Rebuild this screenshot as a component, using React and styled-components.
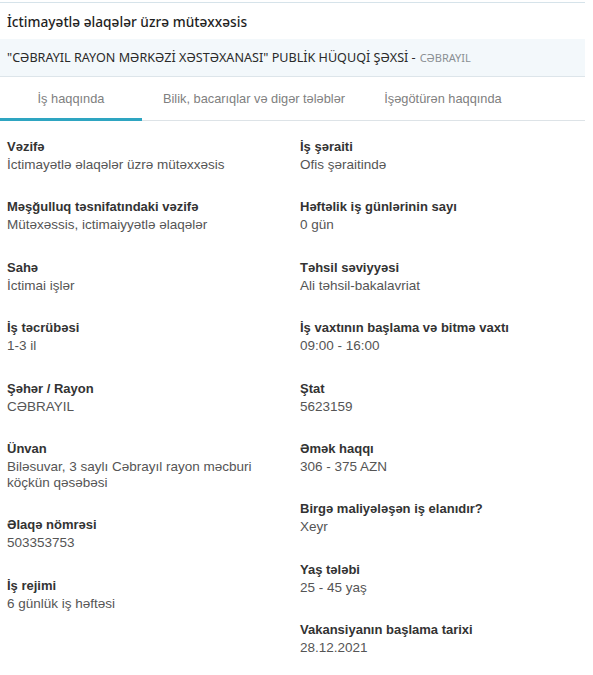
import React, { useState } from 'react';
import styled, { createGlobalStyle } from 'styled-components';

const GlobalStyle = createGlobalStyle`
  body {
    margin: 0;
    background: #fff;
    font-family: "Liberation Sans", Arial, sans-serif;
  }
`;

const Page = styled.div`
  width: 585px;
  padding-top: 2px;
`;

const TitleBar = styled.div`
  border-top: 1px solid #d6e3ea;
  height: 36px;
  display: flex;
  align-items: center;
  padding: 0 7px;
  font-family: "Noto Sans", "Open Sans", sans-serif;
  font-size: 13.7px;
  font-weight: 500;
  color: #1f1f1f;
`;

const CompanyBar = styled.div`
  background: #f3f8fb;
  border-bottom: 1px solid #dde5ea;
  height: 37px;
  display: flex;
  align-items: center;
  gap: 4px;
  padding: 0 7px;
  font-family: "Noto Sans", "Open Sans", sans-serif;
  font-size: 12.6px;
  color: #2a2a2a;
`;

const City = styled.span`
  font-size: 11px;
  color: #8a8f93;
`;

const Tabs = styled.div`
  display: flex;
  border-bottom: 1px solid #dde3e7;
`;

const Tab = styled.button`
  flex: none;
  width: ${(p) => p.$w}px;
  height: 44px;
  padding: 2px 0 0;
  background: none;
  border: none;
  border-bottom: 3px solid ${(p) => (p.$active ? '#2ea5c1' : 'transparent')};
  margin-bottom: -1px;
  font-family: "Liberation Sans", Arial, sans-serif;
  font-size: 12.8px;
  color: #808080;
  white-space: nowrap;
  text-align: center;
  cursor: pointer;
`;

const Details = styled.div`
  display: grid;
  grid-template-columns: 293px 1fr;
  padding: 16px 0 0 7px;
`;

const Column = styled.div`
  display: flex;
  flex-direction: column;
`;

const Item = styled.div`
  padding-bottom: 24.4px;
`;

const Label = styled.div`
  font-size: 13px;
  font-weight: bold;
  line-height: 20px;
  color: #333;
`;

const Value = styled.div`
  font-size: 13.5px;
  line-height: 16px;
  color: #555;
  max-width: 260px;
`;

const left = [
  ['Vəzifə', 'İctimayətlə əlaqələr üzrə mütəxxəsis'],
  ['Məşğulluq təsnifatındaki vəzifə', 'Mütəxəssis, ictimaiyyətlə əlaqələr'],
  ['Sahə', 'İctimai işlər'],
  ['İş təcrübəsi', '1-3 il'],
  ['Şəhər / Rayon', 'CƏBRAYIL'],
  ['Ünvan', 'Biləsuvar, 3 saylı Cəbrayıl rayon məcburi köçkün qəsəbəsi'],
  ['Əlaqə nömrəsi', '503353753'],
  ['İş rejimi', '6 günlük iş həftəsi'],
];

const right = [
  ['İş şəraiti', 'Ofis şəraitində'],
  ['Həftəlik iş günlərinin sayı', '0 gün'],
  ['Təhsil səviyyəsi', 'Ali təhsil-bakalavriat'],
  ['İş vaxtının başlama və bitmə vaxtı', '09:00 - 16:00'],
  ['Ştat', '5623159'],
  ['Əmək haqqı', '306 - 375 AZN'],
  ['Birgə maliyələşən iş elanıdır?', 'Xeyr'],
  ['Yaş tələbi', '25 - 45 yaş'],
  ['Vakansiyanın başlama tarixi', '28.12.2021'],
];

const tabs = [
  ['İş haqqında', 142],
  ['Bilik, bacarıqlar və digər tələblər', 224],
  ['İşəgötürən haqqında', 154],
];

export default function App () {
  const [active, setActive] = useState(0);

  return (
    <Page>
      <GlobalStyle />
      <TitleBar>İctimayətlə əlaqələr üzrə mütəxxəsis</TitleBar>
      <CompanyBar>
        "CƏBRAYIL RAYON MƏRKƏZİ XƏSTƏXANASI" PUBLİK HÜQUQİ ŞƏXSİ -
        <City>CƏBRAYIL</City>
      </CompanyBar>
      <Tabs>
        {tabs.map(([name, w], i) => (
          <Tab key={name} $w={w} $active={i === active} onClick={() => setActive(i)}>
            {name}
          </Tab>
        ))}
      </Tabs>
      <Details>
        <Column>
          {left.map(([l, v]) => (
            <Item key={l}>
              <Label>{l}</Label>
              <Value>{v}</Value>
            </Item>
          ))}
        </Column>
        <Column>
          {right.map(([l, v]) => (
            <Item key={l}>
              <Label>{l}</Label>
              <Value>{v}</Value>
            </Item>
          ))}
        </Column>
      </Details>
    </Page>
  );
}
